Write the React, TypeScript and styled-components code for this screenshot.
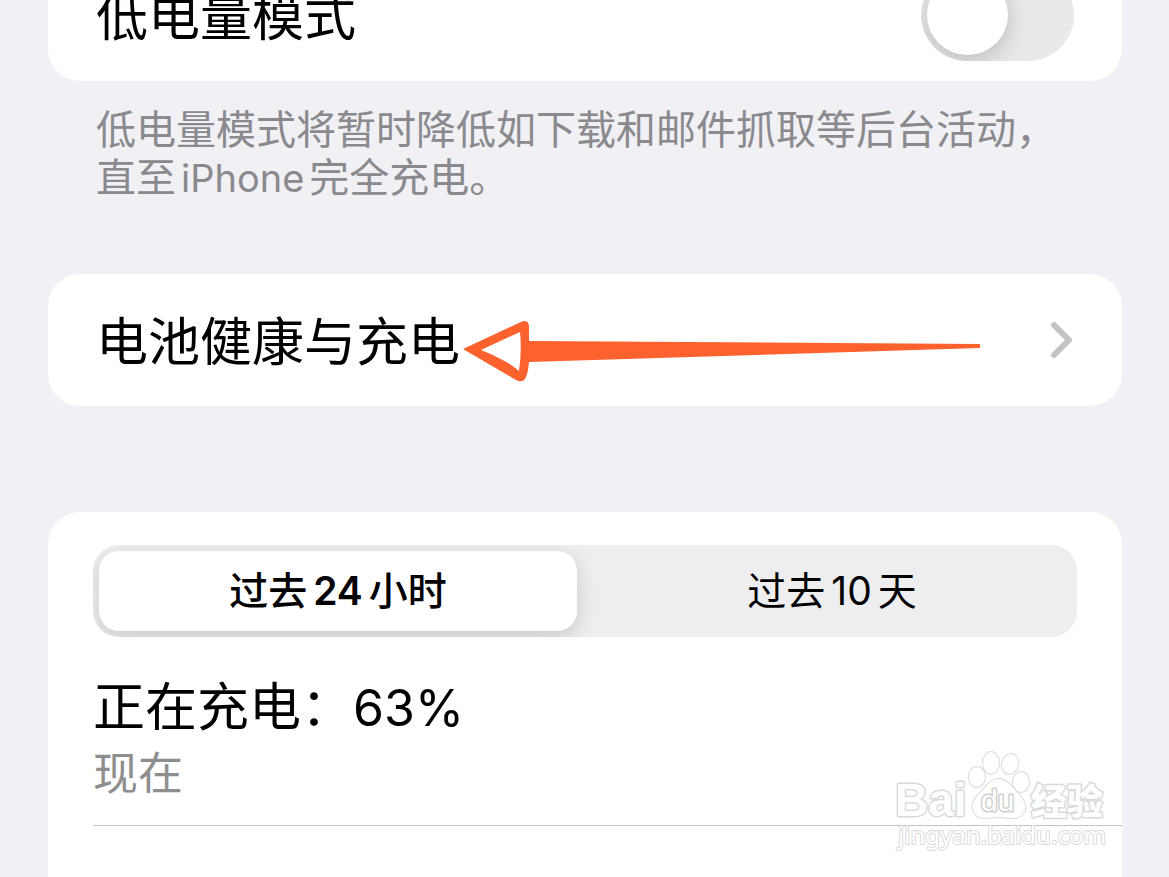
import React, { useState } from "react";
import styled, { createGlobalStyle } from "styled-components";

const GlobalStyle = createGlobalStyle`
  *, *::before, *::after { box-sizing: border-box; }
  body {
    margin: 0;
    background: #f0f0f5;
    color: #000;
    font-family: Inter, "Noto Sans CJK SC", sans-serif;
    overflow: hidden;
  }
`;

/* The list is scrolled, so the first row starts above the window. */
const Screen = styled.main`
  position: relative;
  height: 100vh;
  overflow: hidden;
`;

const Scrolled = styled.div`
  margin-top: -51px;
  padding: 0 47px 0 48px;
`;

const Card = styled.section`
  background: #fff;
  border-radius: 32px;
`;

const Row = styled.div`
  position: relative;
  display: flex;
  align-items: center;
  justify-content: space-between;
  height: 132px;
  padding: 0 48px;
  font-size: 52px;
  line-height: 64px;
  color: #000;
  text-decoration: none;
`;

const RowLabel = styled.label`
  padding-top: 6px;
`;

const Footnote = styled.p`
  margin: 0;
  padding: 25px 48px 72px;
  font-size: 40px;
  line-height: 48px;
  color: #8a8a8e;
`;

const Latin = styled.span<{ $size?: number; $weight?: number; $gap?: number }>`
  margin: 0 ${(p) => p.$gap ?? 6}px;
  font-size: ${(p) => (p.$size ? `${p.$size}px` : "inherit")};
  font-weight: ${(p) => p.$weight ?? "inherit"};
`;

const Switch = styled.input`
  appearance: none;
  flex: none;
  width: 153px;
  height: 92px;
  margin: 0;
  padding: 6px;
  overflow: hidden;
  border-radius: 46px;
  background: ${(p) => (p.checked ? "#34c759" : "#e9e9eb")};

  &::before {
    content: "";
    display: block;
    width: 81px;
    height: 80px;
    margin-left: ${(p) => (p.checked ? "60px" : "0")};
    border-radius: 50%;
    background: #fff;
    box-shadow: 0 6px 24px rgba(0, 0, 0, 0.2);
  }
`;

const Chevron = styled.svg`
  flex: none;
  width: 24px;
  height: 40px;
`;

const Arrow = styled.svg`
  position: absolute;
  left: 412px;
  top: 44px;
  width: 522px;
  height: 66px;
`;

const UsageCard = styled(Card)`
  margin-top: 106px;
  padding: 33px 0 80px 45px;
`;

const Segments = styled.div`
  display: flex;
  gap: 16px;
  margin-right: 45px;
  height: 92px;
  padding: 6px;
  overflow: hidden;
  border-radius: 26px;
  background: #eeeef0;
`;

const Segment = styled.button<{ $active: boolean }>`
  flex: 1;
  border: 0;
  padding: 0;
  border-radius: 20px;
  background: ${(p) => (p.$active ? "#fff" : "transparent")};
  box-shadow: ${(p) => (p.$active ? "0 6px 20px rgba(0, 0, 0, 0.16)" : "none")};
  color: #000;
  font-family: inherit;
  font-size: 39px;
  line-height: 48px;
  font-weight: ${(p) => (p.$active ? 500 : 400)};
`;

const Status = styled.h2`
  margin: 38px 0 0;
  font-size: 52px;
  line-height: 66px;
  font-weight: 400;
`;

const StatusTime = styled.p`
  margin: 0;
  font-size: 45px;
  line-height: 66px;
  color: #8e8e8e;
`;

const Divider = styled.hr`
  margin: 18px 0 0;
  border: 0;
  border-top: 1px solid #c4c4c6;
`;

const Watermark = styled.svg`
  position: absolute;
  right: 59px;
  bottom: 22px;
  width: 216px;
  height: 108px;
`;

const spans = [
  { id: "day", count: "24", unit: "小时" },
  { id: "tenDays", count: "10", unit: "天" },
];

export default function App() {
  const [lowPower, setLowPower] = useState(false);
  const [span, setSpan] = useState("day");

  return (
    <Screen>
      <GlobalStyle />
      <Scrolled>
        <Card>
          <Row>
            <RowLabel htmlFor="low-power">低电量模式</RowLabel>
            <Switch
              id="low-power"
              type="checkbox"
              role="switch"
              checked={lowPower}
              onChange={(e) => setLowPower(e.target.checked)}
            />
          </Row>
        </Card>
        <Footnote>
          低电量模式将暂时降低如下载和邮件抓取等后台活动，
          <br />
          直至<Latin $size={38} $gap={5}>iPhone</Latin>完全充电。
        </Footnote>

        <Card>
          <Row as="a" href="#battery-health">
            <RowLabel as="span">电池健康与充电</RowLabel>
            <Arrow viewBox="0 0 522 66" aria-hidden="true">
              <path
                fill="#fd612d"
                fillRule="evenodd"
                d="M3 31 L61 4 Q68 1 69 8 L69 23 L520 26 L520 30 L69 44 Q68 56 65 61 Q62 65 56 62 Z M21 32 Q48 43 59 53 Q62 32 60 14 Z"
              />
            </Arrow>
            <Chevron viewBox="0 0 24 40" aria-hidden="true">
              <path
                d="M4 5 L19 20 L4 35"
                fill="none"
                stroke="#c3c3c5"
                strokeWidth="6"
                strokeLinecap="round"
                strokeLinejoin="round"
              />
            </Chevron>
          </Row>
        </Card>

        <UsageCard>
          <Segments>
            {spans.map((s) => (
              <Segment
                key={s.id}
                type="button"
                $active={span === s.id}
                aria-pressed={span === s.id}
                onClick={() => setSpan(s.id)}
              >
                过去<Latin $weight={span === s.id ? 600 : 400}>{s.count}</Latin>
                {s.unit}
              </Segment>
            ))}
          </Segments>
          <Status>
            正在充电：<Latin $size={50} $gap={0}>63%</Latin>
          </Status>
          <StatusTime>现在</StatusTime>
          <Divider />
        </UsageCard>
      </Scrolled>

      <Watermark viewBox="0 0 216 108" role="img" aria-label="Baidu 经验">
        <g fill="#fff" stroke="#dadada" strokeWidth="3" paintOrder="stroke" strokeLinejoin="round">
          <text x="1" y="69" fontFamily="Liberation Sans, sans-serif" fontWeight="700" fontSize="46">
            Bai
          </text>
          <g strokeWidth="2">
            <ellipse cx="83" cy="30" rx="8" ry="10" />
            <ellipse cx="97" cy="16" rx="8" ry="11" />
            <ellipse cx="116" cy="17" rx="8" ry="10" transform="rotate(12 116 17)" />
            <ellipse cx="127" cy="35" rx="8" ry="10" />
            <path d="M104 32 C96 32 93 39 88 44 C82 50 77 55 79 63 C82 73 91 71 104 70 C117 71 127 74 131 63 C133 55 126 49 121 43 C116 37 112 32 104 32 Z" />
          </g>
          <text x="87" y="64" fontFamily="Liberation Sans, sans-serif" fontSize="30" stroke="#cfcfcf">
            du
          </text>
          <text x="137" y="68" fontFamily="Noto Sans CJK SC, sans-serif" fontWeight="900" fontSize="36">
            经验
          </text>
          <text x="4" y="97" fontFamily="Noto Sans, sans-serif" fontSize="24" strokeWidth="2">
            jingyan.baidu.com
          </text>
        </g>
      </Watermark>
    </Screen>
  );
}
